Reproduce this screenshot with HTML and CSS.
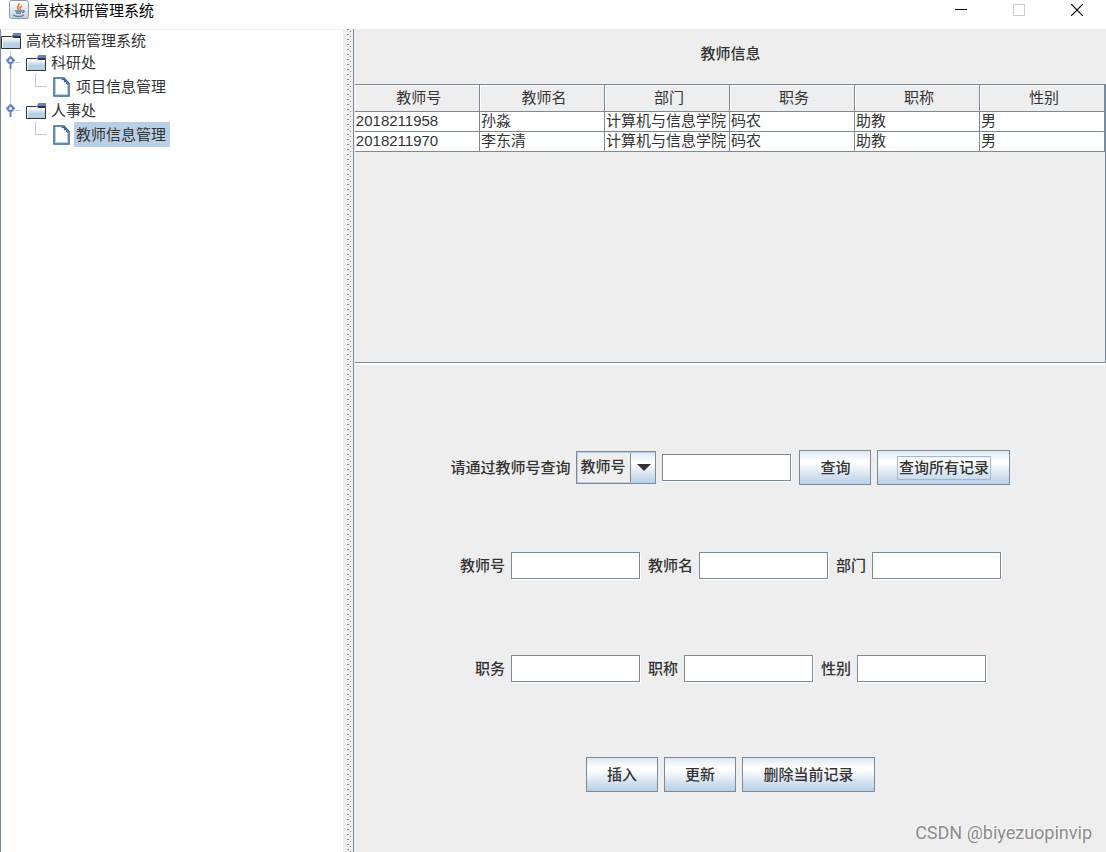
FILE: index.html
```html
<!DOCTYPE html>
<html lang="zh-CN">
<head>
<meta charset="utf-8">
<title>高校科研管理系统</title>
<link rel="stylesheet" href="styles.css">
</head>
<body>
<svg width="0" height="0" class="defs" aria-hidden="true">
  <defs>
    <linearGradient id="folderFill" x1="0" y1="0" x2="0" y2="1">
      <stop offset="0.1" stop-color="#fff"/><stop offset="0.6" stop-color="#b8cfe5"/>
    </linearGradient>
    <symbol id="folder" viewBox="0 0 20 16">
      <path d="M.5 15.500V3.500H10.500L12.500 4.500H19.500V15.500Z" fill="url(#folderFill)" stroke="#333"/>
      <path d="M1 4.500H11M1.500 5V15" stroke="#fff" fill="none"/>
      <path d="M10.500 3.500L12.500 0H20V3H13L12 4.500Z" fill="#6382bf"/>
      <path d="M12 3.500H20" stroke="#333"/>
    </symbol>
    <symbol id="sheet" viewBox="0 0 17 20">
      <path d="M1 1H11L16 6.500V19H1Z" fill="#fff" stroke="#336699" stroke-width="1.500"/>
      <path d="M2 17.500H14.500V9M2.500 2V17" fill="none" stroke="#b8cfe5"/>
      <path d="M8.500 2.500L15 8.500V6.500L11 1.500H8.500Z" fill="#336699"/>
      <path d="M10.500 3V4.500M12.500 5V6.500" stroke="#fff"/>
    </symbol>
    <symbol id="knob" viewBox="0 0 9 13">
      <path d="M4.500 6V13" stroke="#6382bf" stroke-width="2"/>
      <path d="M0 4.500H9M4.500 0V3" stroke="#6382bf" stroke-width="2"/>
      <circle cx="4.500" cy="4.500" r="2.500" fill="#fff" stroke="#6382bf" stroke-width="2"/>
    </symbol>
  </defs>
</svg>
<div class="window">
  <header class="titlebar">
    <svg class="app-icon" width="20" height="20" viewBox="0 0 20 20" aria-hidden="true">
      <defs><linearGradient id="tile" x1="0" y1="0" x2="0" y2="1"><stop offset="0" stop-color="#fff"/><stop offset="1" stop-color="#c5d0da"/></linearGradient></defs>
      <rect x=".5" y=".5" width="19" height="18" rx="2" fill="url(#tile)" stroke="#8b98a5"/>
      <path d="M10 10C6 7 11 6 10 3M12 10C10 8 11 7 13 6" fill="none" stroke="#e27a3b" stroke-width="1.500"/>
      <path d="M6 11H13M7 13H12M4 15C7 17 13 17 15 15M13 11C16 10 16 12 13 13" fill="none" stroke="#557f9f" stroke-width="1.300"/>
    </svg>
    <h1 class="app-title">高校科研管理系统</h1>
    <div class="window-buttons">
      <button type="button" class="window-button" aria-label="最小化"><svg width="12" height="12"><path d="M0 5.500H12" stroke="#000"/></svg></button>
      <button type="button" class="window-button" aria-label="最大化" disabled><svg width="12" height="12"><rect x=".5" y=".5" width="11" height="11" fill="none" stroke="#ccc"/></svg></button>
      <button type="button" class="window-button" aria-label="关闭"><svg width="12" height="12"><path d="M0 0L12 12M12 0L0 12" stroke="#000" stroke-width="1.200"/></svg></button>
    </div>
  </header>
  <div class="split">
    <nav class="tree-pane">
      <div class="node root"><svg class="folder"><use href="#folder"/></svg><span class="node-text">高校科研管理系统</span></div>
      <ul class="branches">
        <li class="branch">
          <div class="node"><svg class="knob"><use href="#knob"/></svg><span class="twig"></span><svg class="folder"><use href="#folder"/></svg><span class="node-text">科研处</span></div>
          <div class="node leaf"><span class="elbow"></span><svg class="sheet"><use href="#sheet"/></svg><span class="node-text">项目信息管理</span></div>
        </li>
        <li class="branch last">
          <div class="node"><svg class="knob"><use href="#knob"/></svg><span class="twig"></span><svg class="folder"><use href="#folder"/></svg><span class="node-text">人事处</span></div>
          <div class="node leaf"><span class="elbow"></span><svg class="sheet"><use href="#sheet"/></svg><span class="node-text selected">教师信息管理</span></div>
        </li>
      </ul>
    </nav>
    <div class="divider"></div>
    <main class="content">
      <h2 class="heading">教师信息</h2>
      <div class="table-view">
        <table class="records">
          <thead><tr><th>教师号</th><th>教师名</th><th>部门</th><th>职务</th><th>职称</th><th>性别</th></tr></thead>
          <tbody>
            <tr><td>2018211958</td><td>孙淼</td><td>计算机与信息学院</td><td>码农</td><td>助教</td><td>男</td></tr>
            <tr><td>2018211970</td><td>李东清</td><td>计算机与信息学院</td><td>码农</td><td>助教</td><td>男</td></tr>
          </tbody>
        </table>
      </div>
      <form class="form">
        <div class="row">
          <label for="key">请通过教师号查询</label>
          <span class="combo">
            <select id="key" class="combo-select"><option>教师号</option></select>
            <svg class="combo-arrow" width="14" height="7"><path d="M0 0H14L7 7Z" fill="#333"/></svg>
          </span>
          <input class="field" type="text" aria-label="查询内容">
          <button type="button" class="button">查询</button>
          <button type="button" class="button wide"><span class="focus">查询所有记录</span></button>
        </div>
        <div class="row">
          <label for="no">教师号</label><input class="field" id="no" type="text">
          <label for="name">教师名</label><input class="field" id="name" type="text">
          <label for="dept">部门</label><input class="field" id="dept" type="text">
        </div>
        <div class="row">
          <label for="post">职务</label><input class="field" id="post" type="text">
          <label for="rank">职称</label><input class="field" id="rank" type="text">
          <label for="sex">性别</label><input class="field" id="sex" type="text">
        </div>
        <div class="row">
          <button type="button" class="button">插入</button>
          <button type="button" class="button">更新</button>
          <button type="button" class="button wide">删除当前记录</button>
        </div>
      </form>
    </main>
  </div>
  <div class="watermark">CSDN @biyezuopinvip</div>
</div>
</body>
</html>
```
FILE: styles.css
```css
* { box-sizing: border-box; }

body {
  margin: 0;
  color: #333;
  font-family: "Liberation Sans", "Noto Sans CJK SC", sans-serif;
  font-size: 15px;
  line-height: 20px;
}

.defs { position: absolute; }

.window {
  position: relative;
  display: flex;
  flex-direction: column;
  min-height: 100vh;
  background: #fff;
}

.titlebar {
  display: flex;
  align-items: flex-start;
  height: 29px;
  padding-left: 9px;
}

.app-title {
  margin: 0 0 0 5px;
  color: #000;
  font-size: 15px;
  font-weight: 400;
  line-height: 22px;
}

.window-buttons { display: flex; margin-left: auto; }

.window-button {
  display: flex;
  align-items: center;
  justify-content: center;
  width: 58px;
  height: 20px;
  padding: 0;
  border: 0;
  background: none;
}

.split { display: flex; flex: 1; }

.tree-pane {
  flex: 0 0 31%;
  border-top: 1px solid #eee;
  border-left: 1px solid #7a8a99;
}

.node { display: flex; align-items: center; height: 23px; }
.root { height: 21px; }
.leaf { height: 25px; }
.node-text { margin-left: 3px; padding: 0 2px; line-height: 23px; }
.leaf .node-text { padding: 0 4px 0 2px; margin-left: 4px; line-height: 25px; }
.selected { background: #b8cfe5; }
.folder { width: 20px; height: 16px; }
.sheet { width: 17px; height: 20px; }
.knob { width: 9px; height: 13px; margin-left: 5px; }
.twig { width: 6px; height: 1px; margin-right: 5px; background: #b8cfe5; }

.elbow {
  align-self: flex-start;
  width: 12px;
  height: 13px;
  margin: 0 6px 0 34px;
  border-bottom: 1px solid #b8cfe5;
  border-left: 1px solid #b8cfe5;
}

.branches { margin: 0; padding: 0; list-style: none; }
.branch { background: linear-gradient(#b8cfe5, #b8cfe5) 9px 0 / 1px 100% no-repeat; }
.branch.last { background-size: 1px 12px; }

.divider {
  flex: 0 0 10px;
  background:
    linear-gradient(#7a8a99 1px, transparent 1px) 4px 0 / 2px 5px repeat-y,
    linear-gradient(#7a8a99 1px, transparent 1px) 7px 2px / 1px 5px repeat-y,
    linear-gradient(transparent 3px, #fff 3px) 3px 0 / 1px 5px repeat-y,
    #eee;
}

.content {
  display: flex;
  flex: 1;
  flex-direction: column;
  min-width: 0;
  padding-left: 1px;
  border-left: 1px solid #7a8a99;
  background: #eee;
}

.heading {
  margin: 0;
  padding: 15px 0 20px;
  font-size: 15px;
  font-weight: 500;
  text-align: center;
}

.table-view {
  height: 279px;
  border-top: 1px solid #7a8a99;
  border-right: 1px solid #7a8a99;
  border-bottom: 1px solid #7a8a99;
  box-shadow: 0 2px #fff;
}

.records {
  width: 100%;
  border-spacing: 0;
  table-layout: fixed;
}

.records th,
.records td {
  overflow: hidden;
  padding: 0 1px;
  border-right: 1px solid #7a8a99;
  border-bottom: 1px solid #7a8a99;
  white-space: nowrap;
}

.records th {
  height: 27px;
  padding-left: 5px;
  font-weight: 400;
  box-shadow: inset 1px 1px #fff;
}

.records td { height: 20px; background: #fff; line-height: 18px; vertical-align: top; }

.form {
  display: grid;
  flex: 1;
  grid-template-rows: 102px 103px 102px auto;
  padding: 87px 0 16px;
}

.row {
  display: flex;
  align-items: center;
  align-self: start;
  justify-content: center;
  gap: 6px;
  font-weight: 500;
}

.field {
  width: 129px;
  height: 27px;
  margin-right: 2px;
  padding: 0 3px;
  border: 1px solid #7a8a99;
  background: #fff;
  box-shadow: 1px 1px #fff;
  font: inherit;
}

.field:last-child { margin-right: 0; }

.combo { position: relative; display: flex; }

.combo-select {
  width: 80px;
  height: 33px;
  padding: 0 0 2px 3px;
  border: 1px solid #7a8a99;
  border-radius: 0;
  appearance: none;
  background:
    linear-gradient(#7a8a99, #7a8a99) right 24px top / 1px 100% no-repeat,
    linear-gradient(#dde8f3, #fff 35%, #b8cfe5) right / 24px 100% no-repeat,
    #eee;
  box-shadow: inset 1px 1px #b8cfe5, inset 0 -1px #b8cfe5;
  color: #333;
  font: inherit;
}

.combo-arrow {
  position: absolute;
  top: 13px;
  right: 5px;
  pointer-events: none;
}

.button {
  min-width: 72px;
  height: 35px;
  padding: 0;
  border: 1px solid #7a8a99;
  background: linear-gradient(#dde8f3, #fff 30%, #fff 35%, #b8cfe5);
  color: #333;
  font: inherit;
}

.wide { width: 133px; }

.focus {
  display: inline-block;
  padding: 1px;
  border: 1px solid #a3b8cc;
}

.watermark {
  position: absolute;
  right: 14px;
  bottom: 9px;
  color: #8c8c8c;
  font-family: Roboto, "Liberation Sans", sans-serif;
  font-size: 18px;
  text-shadow: -1px -1px #fff;
}
```
